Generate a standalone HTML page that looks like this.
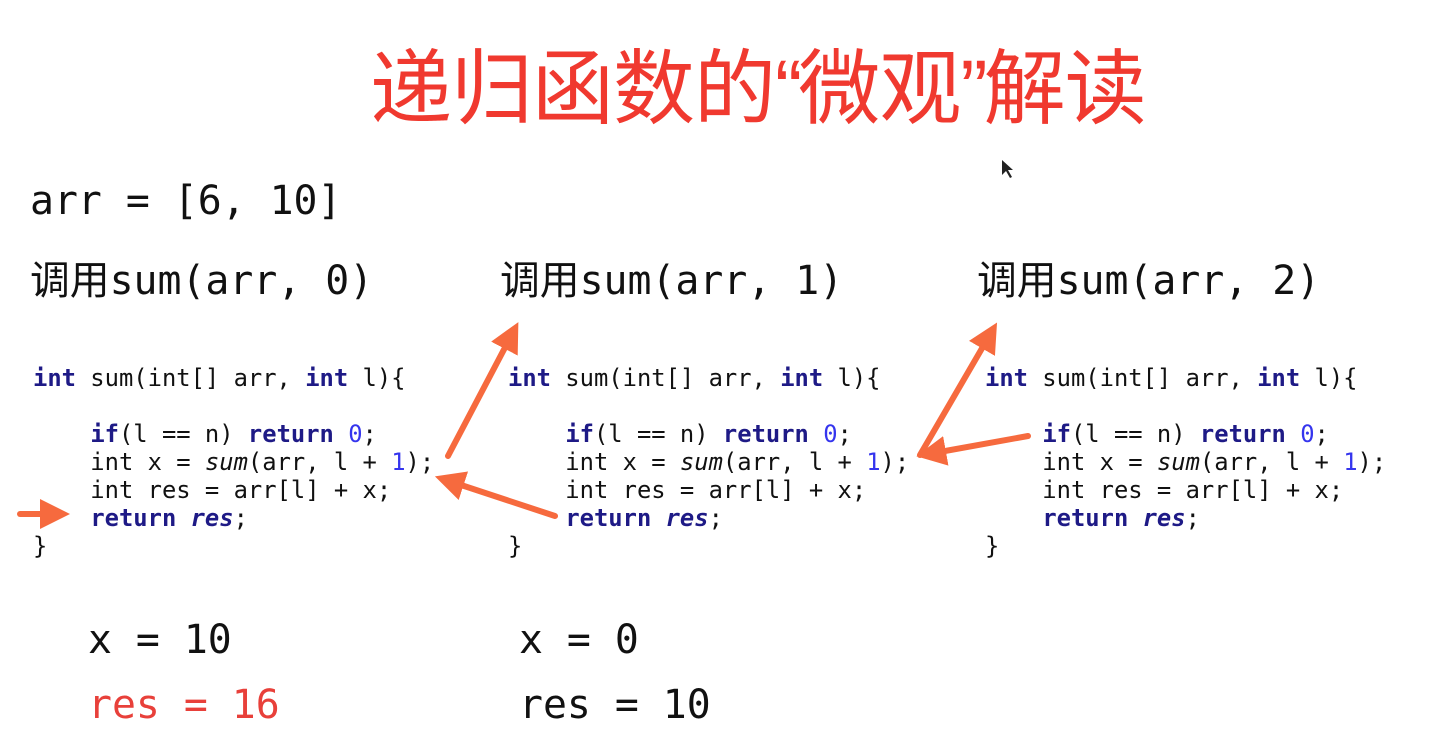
<!DOCTYPE html>
<html><head><meta charset="utf-8"><style>
body{margin:0;width:1447px;height:754px;background:#fff;position:relative;overflow:hidden}
.t{position:absolute;left:370px;top:22px;font:400 82px "Noto Sans CJK SC",sans-serif;color:#f0392f;letter-spacing:-1px;white-space:nowrap}
.q{font-family:"Liberation Sans",sans-serif;letter-spacing:-4px}
.m{position:absolute;font-family:"DejaVu Sans Mono","Liberation Mono","Noto Sans CJK SC",monospace;white-space:pre;color:#111}
.big{font-size:39.8px;line-height:46px}
.cj{font-family:"Noto Sans CJK SC",sans-serif}
.code{font-size:23.8px;line-height:28px;color:#111}
.k{color:#1e1a86;font-weight:bold}
.n{color:#3535ee}
i{font-style:italic}
</style></head><body>
<div class="t">递归函数的<span class="q">“</span>微观<span class="q">”</span>解读</div>
<div class="m big" style="left:30px;top:178px">arr = [6, 10]</div>
<div class="m big" style="left:30px;top:255px"><span class="cj">调用</span>sum(arr, 0)</div>
<div class="m big" style="left:500px;top:255px"><span class="cj">调用</span>sum(arr, 1)</div>
<div class="m big" style="left:977px;top:255px"><span class="cj">调用</span>sum(arr, 2)</div>
<div class="m code" style="left:33px;top:364px"><span class="k">int</span> sum(int[] arr, <span class="k">int</span> l){

    <span class="k">if</span>(l == n) <span class="k">return</span> <span class="n">0</span>;
    int x = <i>sum</i>(arr, l + <span class="n">1</span>);
    int res = arr[l] + x;
    <span class="k">return</span> <i class="k">res</i>;
}</div>
<div class="m code" style="left:508px;top:364px"><span class="k">int</span> sum(int[] arr, <span class="k">int</span> l){

    <span class="k">if</span>(l == n) <span class="k">return</span> <span class="n">0</span>;
    int x = <i>sum</i>(arr, l + <span class="n">1</span>);
    int res = arr[l] + x;
    <span class="k">return</span> <i class="k">res</i>;
}</div>
<div class="m code" style="left:985px;top:364px"><span class="k">int</span> sum(int[] arr, <span class="k">int</span> l){

    <span class="k">if</span>(l == n) <span class="k">return</span> <span class="n">0</span>;
    int x = <i>sum</i>(arr, l + <span class="n">1</span>);
    int res = arr[l] + x;
    <span class="k">return</span> <i class="k">res</i>;
}</div>
<div class="m big" style="left:88px;top:617px">x = 10</div>
<div class="m big" style="left:88px;top:682px;color:#e8403a">res = 16</div>
<div class="m big" style="left:519px;top:617px">x = 0</div>
<div class="m big" style="left:519px;top:682px">res = 10</div>
<svg width="1447" height="754" style="position:absolute;left:0;top:0">
<defs><marker id="a" markerWidth="5" markerHeight="5" refX="2" refY="2.5" orient="auto"><path d="M0,0 L5,2.5 L0,5 Z" fill="#f66a3e"/></marker></defs>
<g stroke="#f66a3e" stroke-width="6" stroke-linecap="round" fill="none" marker-end="url(#a)">
<line x1="20" y1="514" x2="52" y2="514"/>
<line x1="448" y1="456" x2="510" y2="338"/>
<line x1="555" y1="516" x2="452" y2="482"/>
<line x1="920" y1="455" x2="988" y2="338"/>
<line x1="1028" y1="436" x2="934" y2="453"/>
</g>
<path d="M1002,160 L1002,175 L1006,171 L1010,178 L1012,177 L1008,170 L1013,170 Z" fill="#222"/>
</svg>
</body></html>
